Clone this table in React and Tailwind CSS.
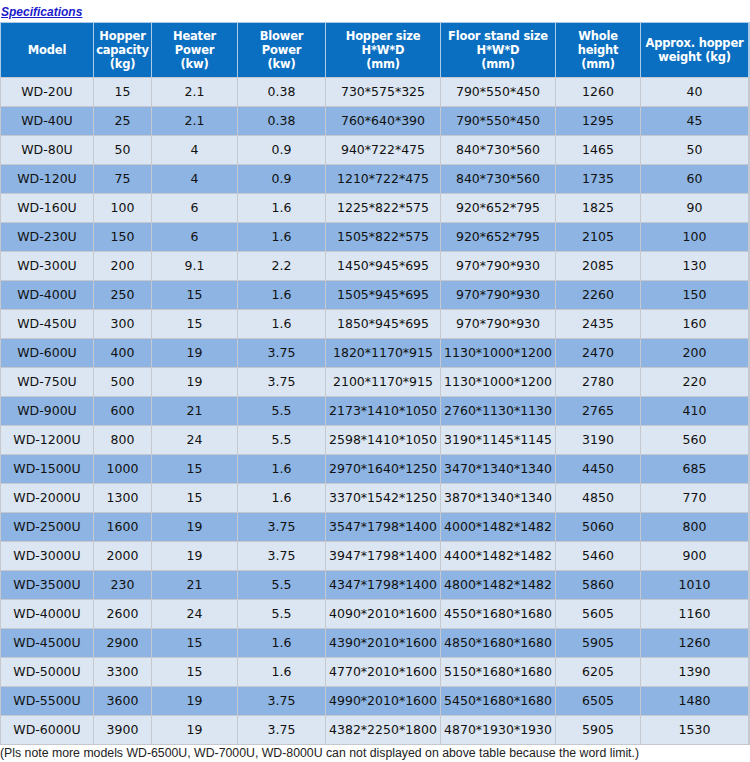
import React from "react";

const rows = [
  ["WD-20U", "15", "2.1", "0.38", "730*575*325", "790*550*450", "1260", "40"],
  ["WD-40U", "25", "2.1", "0.38", "760*640*390", "790*550*450", "1295", "45"],
  ["WD-80U", "50", "4", "0.9", "940*722*475", "840*730*560", "1465", "50"],
  ["WD-120U", "75", "4", "0.9", "1210*722*475", "840*730*560", "1735", "60"],
  ["WD-160U", "100", "6", "1.6", "1225*822*575", "920*652*795", "1825", "90"],
  ["WD-230U", "150", "6", "1.6", "1505*822*575", "920*652*795", "2105", "100"],
  ["WD-300U", "200", "9.1", "2.2", "1450*945*695", "970*790*930", "2085", "130"],
  ["WD-400U", "250", "15", "1.6", "1505*945*695", "970*790*930", "2260", "150"],
  ["WD-450U", "300", "15", "1.6", "1850*945*695", "970*790*930", "2435", "160"],
  ["WD-600U", "400", "19", "3.75", "1820*1170*915", "1130*1000*1200", "2470", "200"],
  ["WD-750U", "500", "19", "3.75", "2100*1170*915", "1130*1000*1200", "2780", "220"],
  ["WD-900U", "600", "21", "5.5", "2173*1410*1050", "2760*1130*1130", "2765", "410"],
  ["WD-1200U", "800", "24", "5.5", "2598*1410*1050", "3190*1145*1145", "3190", "560"],
  ["WD-1500U", "1000", "15", "1.6", "2970*1640*1250", "3470*1340*1340", "4450", "685"],
  ["WD-2000U", "1300", "15", "1.6", "3370*1542*1250", "3870*1340*1340", "4850", "770"],
  ["WD-2500U", "1600", "19", "3.75", "3547*1798*1400", "4000*1482*1482", "5060", "800"],
  ["WD-3000U", "2000", "19", "3.75", "3947*1798*1400", "4400*1482*1482", "5460", "900"],
  ["WD-3500U", "230", "21", "5.5", "4347*1798*1400", "4800*1482*1482", "5860", "1010"],
  ["WD-4000U", "2600", "24", "5.5", "4090*2010*1600", "4550*1680*1680", "5605", "1160"],
  ["WD-4500U", "2900", "15", "1.6", "4390*2010*1600", "4850*1680*1680", "5905", "1260"],
  ["WD-5000U", "3300", "15", "1.6", "4770*2010*1600", "5150*1680*1680", "6205", "1390"],
  ["WD-5500U", "3600", "19", "3.75", "4990*2010*1600", "5450*1680*1680", "6505", "1480"],
  ["WD-6000U", "3900", "19", "3.75", "4382*2250*1800", "4870*1930*1930", "5905", "1530"],
];

const headers = [
  ["Model"],
  ["Hopper", "capacity", "(kg)"],
  ["Heater", "Power", "(kw)"],
  ["Blower", "Power", "(kw)"],
  ["Hopper size", "H*W*D", "(mm)"],
  ["Floor stand size", "H*W*D", "(mm)"],
  ["Whole", "height", "(mm)"],
  ["Approx. hopper", "weight (kg)"],
];

const cols =
  "grid grid-cols-[92px_57px_85px_87px_114px_114px_84px_107px] gap-px p-px w-[750px]";

export default function App() {
  return (
    <div className="w-[750px] h-[762px] bg-white overflow-hidden">
      <div className="h-[22px] pl-px pt-[5px] font-['Liberation_Sans',Arial,sans-serif] text-[12px] leading-[14px]">
        <a
          href="#"
          className="font-bold italic underline text-[#1c1ccc]"
        >
          Specifications
        </a>
      </div>
      <div className="font-['DejaVu_Sans',Verdana,sans-serif]">
        <div className={`${cols} pb-0 bg-[#aecbe6]`}>
          {headers.map((h, i) => (
            <div
              key={i}
              className="h-[54px] bg-[#0b6fc1] text-white font-bold text-[11.5px] leading-[14px] tracking-[-0.2px] flex flex-col items-center justify-center text-center whitespace-nowrap"
            >
              {h.map((line, j) => (
                <span key={j}>{line}</span>
              ))}
            </div>
          ))}
        </div>
        <div className={`${cols} bg-[#c5c9cf]`}>
          {rows.map((r, ri) =>
            r.map((c, ci) => (
              <div
                key={`${ri}-${ci}`}
                className={`h-[28px] flex items-center justify-center text-[12.5px] text-[#111] whitespace-nowrap ${
                  ri % 2 === 0 ? "bg-[#dce6f2]" : "bg-[#8db4e2]"
                }`}
              >
                {c}
              </div>
            ))
          )}
        </div>
      </div>
      <div className="font-['Liberation_Sans',Arial,sans-serif] text-[12.3px] leading-[14px] text-[#222] pt-px">
        (Pls note more models WD-6500U, WD-7000U, WD-8000U can not displayed on above table because the word limit.)
      </div>
    </div>
  );
}
